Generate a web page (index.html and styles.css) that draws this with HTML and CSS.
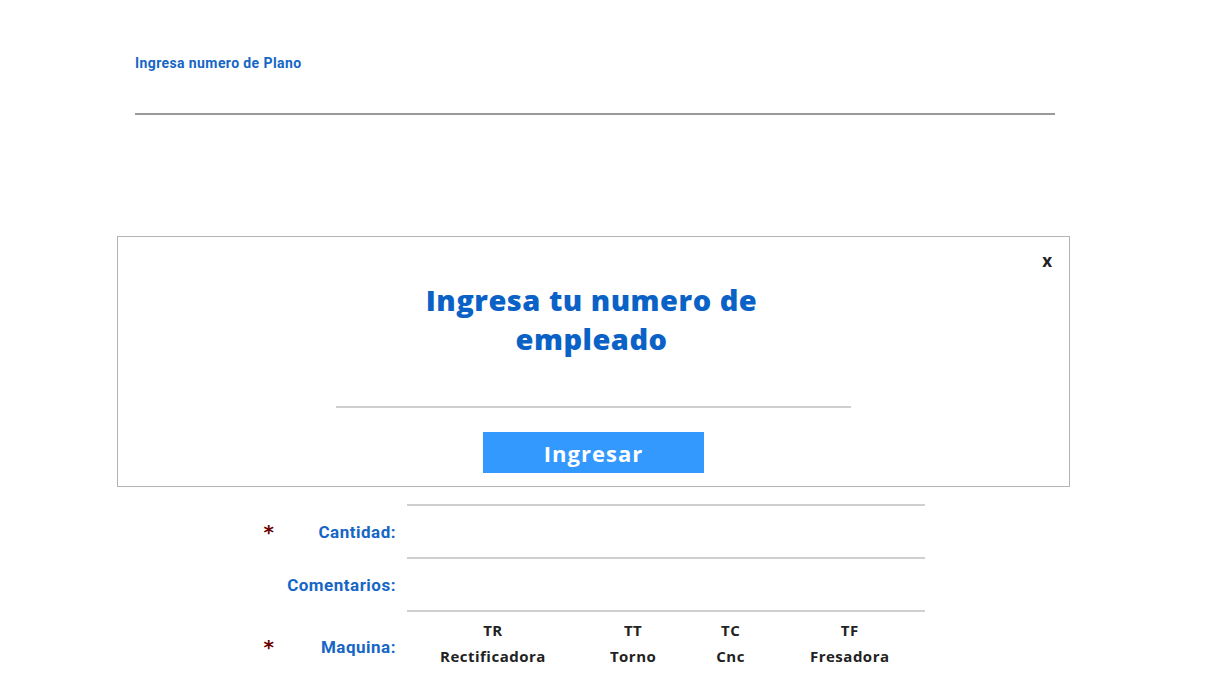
FILE: index.html
```html
<!DOCTYPE html>
<html lang="es">
<head>
<meta charset="utf-8">
<title>Plano</title>
<link rel="stylesheet" href="styles.css">
</head>
<body>
<div class="page">
  <div class="plano">
    <label class="plano-label">Ingresa numero de Plano</label>
    <div class="plano-input"></div>
  </div>

  <div class="modal">
    <div class="modal-close">x</div>
    <h2 class="modal-title">Ingresa tu numero de empleado</h2>
    <div class="modal-input"></div>
    <button class="modal-btn">Ingresar</button>
  </div>

  <div class="form">
    <div class="row row-top">
      <span class="req">*</span>
      <span class="label">Cantidad:</span>
      <div class="input"></div>
    </div>
    <div class="row">
      <span class="req"></span>
      <span class="label">Comentarios:</span>
      <div class="input"></div>
    </div>
    <div class="row row-maq">
      <span class="req">*</span>
      <span class="label">Maquina:</span>
      <div class="options">
        <div class="opt"><span class="code">TR</span><span class="name">Rectificadora</span></div>
        <div class="opt"><span class="code">TT</span><span class="name">Torno</span></div>
        <div class="opt"><span class="code">TC</span><span class="name">Cnc</span></div>
        <div class="opt"><span class="code">TF</span><span class="name">Fresadora</span></div>
      </div>
    </div>
  </div>
</div>
</body>
</html>
```
FILE: styles.css
```css
* { box-sizing: border-box; }
html, body { margin: 0; padding: 0; background: #fff; }
body { font-family: Roboto, "Liberation Sans", sans-serif; height: 696px; overflow: hidden; }

.page { padding-top: 55px; }

.plano { margin-left: 135px; width: 920px; }
.plano-label {
  display: block;
  font-family: Roboto, sans-serif;
  font-weight: 700;
  font-size: 14px;
  line-height: 17px;
  letter-spacing: 0.4px;
  color: #1666c5;
}
.plano-input { height: 43px; border-bottom: 2px solid #9a9a9a; }

.modal {
  position: relative;
  margin: 121px 0 0 117px;
  width: 953px;
  height: 251px;
  border: 1px solid #b4b4b4;
  background: #fff;
  display: flex;
  flex-direction: column;
  align-items: center;
  padding-top: 43px;
}
.modal-close {
  position: absolute;
  top: 12px;
  right: 17px;
  font-family: "Open Sans", sans-serif;
  font-weight: 700;
  font-size: 17px;
  color: #222;
}
.modal-title {
  margin: 0 4px 0 0;
  width: 380px;
  text-align: center;
  font-family: "Open Sans", sans-serif;
  font-weight: 800;
  font-size: 29px;
  line-height: 39px;
  letter-spacing: 0.5px;
  color: #0b62c6;
}
.modal-input { width: 515px; height: 50px; border-bottom: 2px solid #cfcfcf; }
.modal-btn {
  margin-top: 24px;
  width: 221px;
  height: 41px;
  border: 0;
  background: #3399ff;
  color: #fff;
  font-family: "Open Sans", sans-serif;
  font-weight: 700;
  font-size: 22px;
  letter-spacing: 1px;
  padding: 0;
}

.form { margin: 17px 0 0 0; }
.row {
  display: grid;
  grid-template-columns: 274px 122px 11px 518px;
  align-items: center;
  height: 54px;
}
.row .input {
  grid-column: 4;
  height: 54px;
  border-bottom: 2px solid #cfcfcf;
}
.row-top .input { height: 55px; border-top: 2px solid #cfcfcf; }
.req {
  grid-column: 1;
  font-family: "DejaVu Sans", sans-serif;
  font-weight: 700;
  font-size: 20px;
  color: #6b0000;
  justify-self: end;
}
.label {
  grid-column: 2;
  justify-self: end;
  font-family: Roboto, sans-serif;
  font-weight: 700;
  font-size: 17px;
  color: #1666c5;
  letter-spacing: 0.5px;
}
.row-maq { height: 70px; }
.options { grid-column: 4; display: flex; align-self: start; padding-top: 8px; }
.opt {
  display: flex;
  flex-direction: column;
  align-items: center;
  padding: 0 32px;
  font-family: "Open Sans", sans-serif;
  font-weight: 700;
  font-size: 15px;
  letter-spacing: 0.5px;
  color: #222;
}
.opt:first-child { padding-left: 33px; }
.opt:nth-child(2) { padding-right: 30px; }
.opt:nth-child(3) { padding-left: 30px; padding-right: 30px; }
.opt:nth-child(4) { padding-left: 35px; }
.code { line-height: 20px; }
.name { line-height: 32px; }
```
